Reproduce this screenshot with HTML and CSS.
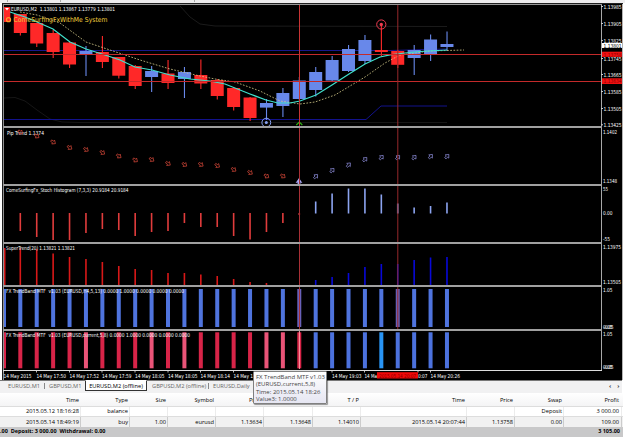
FILE: index.html
```
<!DOCTYPE html>
<html lang="en">
<head>
<meta charset="utf-8">
<title>EURUSD,M2 (offline)</title>
<link rel="stylesheet" href="styles.css">
</head>
<body>
<div class="terminal">
  <div class="toolbar-edge"><i></i><i></i><i></i></div>
  <main class="chart">
    <svg id="price" class="panel" viewBox="0 3 625 124" height="124"></svg>
    <svg id="pip" class="panel" viewBox="0 127 625 58" height="58"></svg>
    <svg id="stoch" class="panel" viewBox="0 185 625 58" height="58"></svg>
    <svg id="super" class="panel" viewBox="0 243 625 43" height="43"></svg>
    <svg id="band1" class="panel" viewBox="0 286 625 44" height="44"></svg>
    <svg id="band2" class="panel" viewBox="0 330 625 40" height="40"></svg>
    <svg id="axis" class="panel" viewBox="0 370 625 10" height="10"></svg>
  </main>
  <nav class="tabs">
    <span class="tab t1">EURUSD,M1</span><span class="tab t2">GBPUSD,M1</span><span class="tab active">EURUSD,M2 (offline)</span><span class="tab t4">GBPUSD,M2 (offline)</span><span class="tab t5">EURUSD,Daily</span>
    <span class="arrows"><b>‹</b><b>›</b></span>
  </nav>
  <section class="history">
    <div class="row head"><span>Time</span><span>Type</span><span>Size</span><span>Symbol</span><span>Price</span><span>S / L</span><span>T / P</span><span>Time</span><span>Price</span><span>Swap</span><span>Profit</span></div>
    <div class="row"><span>2015.05.12 18:16:28</span><span>balance</span><span></span><span></span><span></span><span></span><span></span><span></span><span></span><span>Deposit</span><span>3 000.00</span></div>
    <div class="row alt"><span>2015.05.14 18:49:19</span><span>buy</span><span>1.00</span><span>eurusd</span><span>1.13634</span><span>1.13648</span><span>1.14010</span><span>2015.05.14 20:07:44</span><span>1.13758</span><span>0.00</span><span>109.00</span></div>
    <div class="total"><span>.00&nbsp; Deposit: 3 000.00&nbsp; Withdrawal: 0.00</span><span>3 105.00</span></div>
  </section>
  <div class="tooltip">FX TrendBand MTF v1.03<br>(EURUSD,current,5,8)<br>Time: 2015.05.14 18:26<br>Value3: 1.0000</div>
</div>
<script src="chart.js"></script>
</body>
</html>
```
FILE: chart.js
```
const NS = 'http://www.w3.org/2000/svg';
const RED = '#ff2828', BLUE = '#6888ea';
const X = i => 3.9 + 16.41 * i;

function add(id, tag, attrs, text) {
  const e = document.createElementNS(NS, tag);
  for (const k in attrs) e.setAttribute(k, attrs[k]);
  if (text) e.textContent = text;
  document.getElementById(id).appendChild(e);
}
function rect(id, x, y, width, height, fill) { add(id, 'rect', { x, y, width, height, fill }); }
function label(id, x, y, s, w, fill = '#fff', cls = 'lbl') {
  add(id, 'text', { x, y, fill, class: cls, textLength: w, lengthAdjust: 'spacingAndGlyphs' }, s);
}
function line(id, points, stroke, width, dash) {
  add(id, 'polyline', { points, stroke, 'stroke-width': width, fill: 'none', 'stroke-dasharray': dash || 'none' });
}

// backgrounds
const panels = { price: [3, 127], pip: [127, 185], stoch: [185, 243], super: [243, 286], band1: [286, 330], band2: [330, 370], axis: [370, 380] };
for (const id in panels) {
  const [a, b] = panels[id];
  rect(id, 2, a, 620, b - a, '#000');
}

// price panel
const P = 'price';
line(P, '4,98 15,97.5 25,101 37,110 50,119 62,122 80,122.5 447,122.5', '#1c1c1c', .8);
line(P, '180,6 190,17 200,24 215,26 447,26.5', '#222', .8);
line(P, '4,50.5 390,50.5 447,49', '#1a1a9c', .9);
line(P, '4,119.5 366,119.5 381,106 447,106', '#12128c', 1);

const candles = [
  [7, 22, 7, 22, 0], [14, 33, 14, 35.5, 0], [23, 43.5, 23, 47, 0], [33, 52, 30, 58, 0], [42.5, 64.5, 42, 68, 0],
  [51, 54, 46, 76, 1], [52, 62, 36, 68, 0], [57, 75.7, 57, 78.5, 0], [66, 86, 65, 89, 0], [71, 77, 66, 92, 1],
  [73.5, 83, 60, 89, 0], [72, 79, 67, 98, 1], [75, 83.5, 59.5, 89, 0], [80, 96, 79, 99.5, 0], [88, 107, 87, 110.5, 0],
  [97.5, 118, 97, 121, 0], [103, 107.6, 99, 120, 1], [93, 106, 88, 117, 1], [80.5, 99, 77, 100, 1], [72, 90, 67, 96.5, 1],
  [60, 80.5, 56, 81, 1], [49, 71, 45, 72, 1], [40, 61, 35, 64, 1], [50, 52, 24, 56, 0], [51, 64.8, 50, 68, 0],
  [50, 58, 45, 75, 1], [39.5, 54.5, 34.5, 61, 1], [44, 47, 31.5, 51, 1]
];
candles.forEach(([t, b, hi, lo, up], i) => {
  const c = up ? BLUE : RED, x = X(i);
  if (i === 0) { rect(P, 4, t, 6.3, b - t, c); return; }
  rect(P, x - .5, hi, 1.1, lo - hi, c);
  rect(P, x - 6.5, t, 13, b - t, c);
});
line(P, '20,12 37,15 60,23 86,42 110,50 140,60 170,69 200,76 215,79 235,82 260,91 280,101 300,104 315,102 335,95 365,77 385,63 400,55 430,51 464,50', '#d6cc8c', .8, '1.7 1.5');
line(P, '10,12 25,17 37,22 53,29 70,42 86,49 102,54 120,60 135,67 152,70 170,75 190,79 210,81 225,84 250,94 266,100 278,103 290,103 300,101 316,95 332,85 349,74 365,64 380,57 390,54.8 405,53 420,51.5 447,50', '#40e0cc', 1.2);
line(P, '4,54.5 601,54.5', '#c42a2a', 1);
line(P, '4,81.5 601,81.5', '#c42a2a', 1);
add(P, 'circle', { cx: 381.3, cy: 24.5, r: 4.6, stroke: '#f03c50', 'stroke-width': 1, fill: 'none' });
add(P, 'circle', { cx: 381.3, cy: 24.5, r: 1.7, fill: '#f03c50' });
add(P, 'circle', { cx: 266.3, cy: 122.6, r: 4.4, stroke: '#86a0f0', 'stroke-width': 1, fill: 'none' });
add(P, 'circle', { cx: 266.3, cy: 122.6, r: 1.5, fill: '#86a0f0' });
line(P, '296.3,125 299.3,122 302.3,125', '#2fae12', 1.2);
add(P, 'path', { d: 'M5 8h4l-2 2.6z', fill: '#fff' });
label(P, 11, 11, 'EURUSD,M2  1.13801 1.13867 1.13779 1.13801', 104);
add(P, 'circle', { cx: 8.5, cy: 19.7, r: 2, fill: 'none', stroke: '#ff9a28', 'stroke-width': 1.3 });
label(P, 13.5, 22, 'ComeSurfingFxWithMe System', 94, '#f2ce3c', 'brand');

// pip trend arrows
label('pip', 7, 134.6, 'Pip Trend 1.1374', 37);
const pips = [0, 132, 136, 142, 147.5, 149.5, 152.5, 156, 160, 159.5, 163.5, 164.5, 164.5, 165.5, 169.5, 172.5, 176, 176, 0, 176.5, 170.5, 165, 159.5, 157.5, 157.5, 157.5, 156.5, 156.5];
pips.forEach((y, i) => {
  if (!y) return;
  const up = i > 18;
  add('pip', 'path', {
    d: 'M-2.4-.9H0V-2.4L2.8 0 0 2.4V.9H-2.4z', fill: 'none', stroke: up ? '#8c8cd8' : '#cc4436', 'stroke-width': .7,
    transform: `translate(${X(i)} ${y}) rotate(${up ? -48 : 35})`
  });
});
add('pip', 'path', { d: 'M299 178l3.4 5-2-.6v2.6h-2.8v-2.6l-2 .6z', fill: '#aaa8f4' });

// stochastic histogram around its zero level
label('stoch', 6, 192.2, 'ComeSurfingFx_Stoch Histogram (7,3,3) 20.9184 20.9184', 122.5);
const stoch = [0, 18, 24, 27, 27, 20, 16, 17, 23, 19, 18, 10, 14, 14, 23, 26.5, 19, 10, 2, -12, -20, -25, -25, -19, -10, -6, -7.5, -11];
stoch.forEach((h, i) => {
  if (h) rect('stoch', X(i) - .8, h > 0 ? 213 : 213.5 + h, 1.6, Math.abs(h), h > 0 ? '#e03c3c' : '#8ca4f0');
});

// super trend
const sup = [248, 248, 249, 253.5, 257, 259, 262, 266, 269, 270, 273, 273, 274.5, 276, 279, 282, 283, 0, 0, 280, 277, 273, 267, 264, 264, 260, 257.5, 257];
sup.forEach((y, i) => {
  if (y) rect('super', X(i) - (i ? .8 : 0), y, 1.6, 285 - y, i < 18 ? '#d81818' : '#0808d8');
});
label('super', 6, 249.5, 'SuperTrend(20) 1.13821 1.13821', 69);

// trend bands
const light = [5, 9, 11, 16, 17];
for (let i = 0; i < 28; i++) {
  const x = i ? X(i) - 2 : 4, w = i ? 4 : 2;
  rect('band1', x, 289, w, 38, i === 18 || i === 24 ? '#6860b8' : '#4f74de');
  const c = i < 19 ? (light.includes(i) ? '#ea5478' : '#d82448') : (i === 23 ? '#2894f4' : '#4c72de');
  rect('band2', x, 332.3, w, 36, c);
}
label('band1', 6, 293.3, 'FX TrendBand MTF  v1.03 (EURUSD,H4,5,13) 0.0000 1.0000 0.0000 0.0000 0.0000', 178);
label('band2', 6, 337.1, 'FX TrendBand MTF  v1.03 (EURUSD,current,5,8) 0.0000 1.0000 0.0000 0.0000 0.0000', 184);

// vertical markers cross every panel
for (const id in panels) {
  if (id === 'axis' || id === 'band2') continue;
  const [a, b] = panels[id];
  rect(id, 299, a, 1, b - a, id === 'price' ? '#c83434' : '#a83036');
  rect(id, 397.3, a, 1, b - a, '#96282c');
}
rect('band2', 298.9, 330, 1, 39, '#ff9aa4');

// frames
for (const id in panels) {
  const [a, b] = panels[id];
  rect(id, 2.8, a, 1.2, b - a, '#909090');
  if (id !== 'axis') rect(id, 601, a, 1, b - a, '#a8a8a8');
  rect(id, 622, a, 1, b - a, '#b4b4b4');
  if (id !== 'price' && id !== 'axis') rect(id, 3, a, 599, 1, '#a0a0a0');
  if (id !== 'band2' && id !== 'axis') rect(id, 3, b - 1, 599, 1, '#a0a0a0');
}
rect(P, 3, 3, 620, 1, '#202020');
rect(P, 3, 4, 599, 1, '#989898');
rect('axis', 3, 370, 599, 1, '#ddd');

// price scale
[['1.13985', 8.5], ['1.13905', 25.5], ['1.13825', 42.6], ['1.13745', 60.5], ['1.13665', 76.5], ['1.13585', 93.5], ['1.13505', 110.5], ['1.13425', 126.8]]
  .forEach(([s, y]) => { label(P, 603.5, y, s, 18); rect(P, 601, y - 2.5, 2, 1, '#ccc'); });
rect(P, 602, 43, 20, 5, '#fff');
label(P, 603.5, 47.6, '1.13801', 18, '#000');
rect(P, 602, 51.7, 20, 5.3, '#f01010');
label(P, 603.5, 56.6, '1.13758', 18, '#8c0000');
rect(P, 602, 78.3, 20, 5.7, '#f01010');
label(P, 603.5, 83.4, '1.13634', 18, '#8c0000');
label('pip', 603, 134, '1.1402', 14);
label('pip', 603, 183, '1.1348', 14);
label('stoch', 603, 191, '55', 5);
label('stoch', 603, 215.2, '0.00', 9.5);
label('stoch', 603, 240.8, '-55', 7);
label('super', 603, 249, '1.13975', 18);
label('super', 603, 284.2, '1.13505', 18);
label('band1', 603, 292.4, '1.05', 9.5);
label('band1', 603, 328.5, '0.05', 9.5);
label('band1', 603.5, 328.5, '-0.05', 10);
label('band2', 603, 336.2, '1.05', 9.5);
label('band2', 603, 369.2, '0.05', 9.5);
label('band2', 603.5, 369.2, '-0.05', 10);

// time scale
[['14 May 2015', 3.5, 28], ['14 May 17:50', 36.5, 29.5], ['14 May 17:52', 69.5, 29.5], ['14 May 17:59', 102, 29.5], ['14 May 18:05', 135, 29.5], ['14 May 18:05', 168, 29.5],
 ['14 May 18:14', 200.5, 29.5], ['14 May 1', 233.5, 19.5], ['14 May 19:03', 332, 29.5], ['14 Ma', 364.5, 12.5], ['0:07', 418, 9.5], ['14 May 20:26', 430.5, 29.5]]
  .forEach(([s, x, w]) => { label('axis', x, 378, s, w); rect('axis', x - .5, 371, 1, 1.5, '#bbb'); });
rect('axis', 377, 372.2, 41, 6.3, '#f00808');
label('axis', 379, 377.8, '2015.05.14 20:07', 37, '#800');
```
FILE: styles.css
```
* { box-sizing: border-box; }
body {
  margin: 0;
  background: #fff;
  font-family: "Open Sans", "Noto Sans", sans-serif;
  overflow: hidden;
}
.terminal {
  position: relative;
  width: 625px;
  height: 444px;
  display: flex;
  flex-direction: column;
}
.toolbar-edge {
  height: 3px;
  background: #eeedee;
  display: flex;
}
.toolbar-edge i {
  width: 1px;
  height: 2px;
  background: #aaa;
  margin-left: 7px;
}
.toolbar-edge i:nth-child(2) { margin-left: 52px; }
.toolbar-edge i:nth-child(3) { margin-left: 133px; }
.chart { height: 377px; }
.panel { display: block; width: 625px; }
.lbl { font-family: "DejaVu Sans", sans-serif; font-size: 5.5px; white-space: pre; }
.brand { font-family: "DejaVu Sans", sans-serif; font-size: 6.8px; }

.tabs {
  height: 13px;
  margin-right: 3px;
  border-top: 1px solid #777;
  background: #f1f1f2;
  display: flex;
  font-size: 5.7px;
  line-height: 10px;
  color: #666;
  white-space: nowrap;
}
.t1 { width: 41px; margin-left: 8px; }
.t2 { width: 36px; }
.t4 { width: 61px; margin-left: 5px; }
.t1, .t4 { background: linear-gradient(#888, #888) right 4.5px top 2px / 1px 6px no-repeat; }
.active {
  width: 62px;
  height: 11px;
  margin-top: -1px;
  text-align: center;
  line-height: 11px;
  background: #fff;
  color: #000;
  border: 1px solid #333;
  border-top-color: #fff;
}
.arrows { margin-left: auto; width: 13px; display: flex; gap: 6px; font-size: 6px; color: #333; }

.history { font-size: 5.7px; color: #000; white-space: nowrap; }
.row {
  display: grid;
  grid-template-columns: 81px 49px 38px 48px 48px 49px 48px 106px 48px 49px 58px;
  width: 623px;
  height: 9.5px;
  line-height: 9.5px;
}
.row span { text-align: right; padding-right: 1px; border-right: 1px solid #ececec; }
.row span:last-child { padding-right: 2px; }
.head {
  height: 13.5px;
  line-height: 14px;
  background: linear-gradient(#fff, #f4f4f5);
  border-bottom: 1px solid #ddd;
}
.head span { border-color: transparent; padding-right: 1px; }
.alt {
  height: 11px;
  line-height: 10.5px;
  background: #f1f1f1;
  border-top: 1px solid #ddd;
}
.alt span { border-color: #ccc; }
.total {
  display: flex;
  justify-content: space-between;
  width: 623px;
  height: 10px;
  line-height: 9.5px;
  padding-right: 3px;
  background: #c8c8c9;
  font-weight: 700;
  font-size: 5.5px;
}
.tooltip {
  position: absolute;
  left: 253px;
  top: 371px;
  width: 74px;
  height: 33px;
  padding: 1.5px 2px;
  background: linear-gradient(#fff, #e6e6f2);
  border: 1px solid #808080;
  border-radius: 1px;
  box-shadow: 1px 1px 1px rgba(0, 0, 0, .4);
  font-size: 6px;
  line-height: 7.6px;
  color: #444;
  white-space: nowrap;
}
```
